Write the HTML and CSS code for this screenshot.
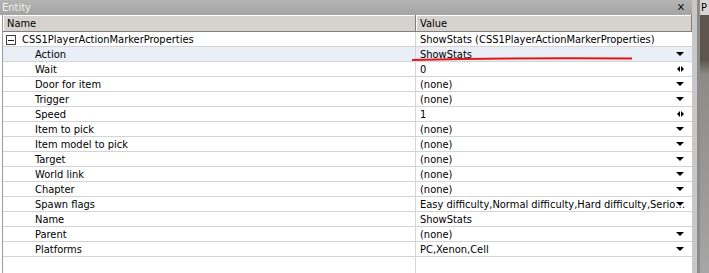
FILE: index.html
```html
<!DOCTYPE html>
<html>
<head>
<meta charset="utf-8">
<link rel="stylesheet" href="styles.css">
</head>
<body>
<div class="app">
  <div class="panel">
    <div class="titlebar"><span class="title">Entity</span><span class="close">✕</span></div>
    <div class="grid">
      <div class="row hdr"><div class="c1">Name</div><div class="c2">Value</div></div>
      <div class="row"><div class="c1 root"><span class="minus"></span>CSS1PlayerActionMarkerProperties</div><div class="c2">ShowStats (CSS1PlayerActionMarkerProperties)</div></div>
      <div class="row sel"><div class="c1 ind">Action</div><div class="c2">ShowStats<span class="dd"></span></div></div>
      <div class="row"><div class="c1 ind">Wait</div><div class="c2">0<span class="spin"><i class="l"></i><i class="r"></i></span></div></div>
      <div class="row"><div class="c1 ind">Door for item</div><div class="c2">(none)<span class="dd"></span></div></div>
      <div class="row"><div class="c1 ind">Trigger</div><div class="c2">(none)<span class="dd"></span></div></div>
      <div class="row"><div class="c1 ind">Speed</div><div class="c2">1<span class="spin"><i class="l"></i><i class="r"></i></span></div></div>
      <div class="row"><div class="c1 ind">Item to pick</div><div class="c2">(none)<span class="dd"></span></div></div>
      <div class="row"><div class="c1 ind">Item model to pick</div><div class="c2">(none)<span class="dd"></span></div></div>
      <div class="row"><div class="c1 ind">Target</div><div class="c2">(none)<span class="dd"></span></div></div>
      <div class="row"><div class="c1 ind">World link</div><div class="c2">(none)<span class="dd"></span></div></div>
      <div class="row"><div class="c1 ind">Chapter</div><div class="c2">(none)<span class="dd"></span></div></div>
      <div class="row"><div class="c1 ind">Spawn flags</div><div class="c2">Easy difficulty,Normal difficulty,Hard difficulty,Serio…<span class="dd"></span></div></div>
      <div class="row"><div class="c1 ind">Name</div><div class="c2">ShowStats</div></div>
      <div class="row"><div class="c1 ind">Parent</div><div class="c2">(none)<span class="dd"></span></div></div>
      <div class="row"><div class="c1 ind">Platforms</div><div class="c2">PC,Xenon,Cell<span class="dd"></span></div></div>
      <div class="row empty"><div class="c1"></div><div class="c2"></div></div>
      <svg class="mark" width="230" height="8" viewBox="0 0 230 8"><path d="M1 5 Q110 2.5 221 3.5" stroke="#e01818" stroke-width="2" fill="none"/></svg>
    </div>
  </div>
  <div class="sep"></div>
  <div class="side"><div class="side-title">P</div><div class="side-img"></div></div>
</div>
</body>
</html>
```
FILE: styles.css
```css
html, body { margin: 0; padding: 0; }
body {
  width: 709px; height: 273px; overflow: hidden;
  font-family: "DejaVu Sans Condensed", "Liberation Sans", sans-serif;
  font-size: 11px; color: #000; background: #fff;
}
.app { display: flex; height: 273px; }
.panel { width: 692px; display: flex; flex-direction: column; background: #fff; }
.titlebar {
  height: 15px; background: linear-gradient(#b4b4b4, #a4a4a4);
  display: flex; align-items: center; justify-content: space-between;
  color: #f2f2f2; padding: 1px 7px 0 2px; box-sizing: border-box;
}
.title { line-height: 14px; }
.close { color: #111; font-size: 11px; line-height: 14px; }
.grid {
  flex: 1; position: relative; display: flex; flex-direction: column;
  border-left: 1px solid #9a9a9a; margin-left: 2px;
}
.row { display: flex; height: 15px; border-bottom: 1px solid #d4d4d4; box-sizing: border-box; }
.row .c1 { width: 413px; border-right: 1px solid #d4d4d4; padding: 1px 0 0 4px; box-sizing: border-box; line-height: 13px; white-space: nowrap; display: flex; align-items: center; }
.row .c2 { flex: 1; padding: 1px 0 0 4px; line-height: 13px; white-space: nowrap; display: flex; align-items: center; position: relative; }
.hdr { height: 17px; background: #d6d3ce; border-bottom: 1px solid #808080; }
.hdr .c1 { border-right: 1px solid #808080; box-shadow: inset 1px 1px 0 #fff; line-height: 15px; }
.hdr .c2 { box-shadow: inset 1px 1px 0 #fff; border-right: 1px solid #808080; line-height: 15px; }
.minus {
  width: 10px; height: 10px; border: 1px solid #404040; box-sizing: border-box;
  margin-right: 6px; position: relative; flex: none; margin-left: -1px;
}
.minus::after { content: ""; position: absolute; left: 1px; right: 1px; top: 4px; height: 1px; background: #202020; }
.ind { padding-left: 32px !important; }
.sel { background: #eaeef6; }
.dd {
  position: absolute; right: 8px; top: 5px;
  width: 0; height: 0; border-left: 4px solid transparent; border-right: 4px solid transparent; border-top: 4px solid #000;
}
.spin { position: absolute; right: 8px; top: 4px; display: flex; gap: 1px; }
.spin i { width: 0; height: 0; border-top: 3.5px solid transparent; border-bottom: 3.5px solid transparent; }
.spin .l { border-right: 3px solid #000; }
.spin .r { border-left: 3px solid #000; }
.empty { flex: 1; border-bottom: none; }
.mark { position: absolute; left: 408px; top: 40px; }
.sep { width: 8px; background: linear-gradient(90deg, #c8c8c8 0 5px, #8c8c8c 5px 8px); }
.side { flex: 1; display: flex; flex-direction: column; background: #a8a8a8; }
.side-title { height: 15px; background: #d6d6d6; line-height: 15px; padding-left: 1px; font-size: 11px; overflow: hidden; }
.side-img { flex: 1; background: linear-gradient(#5e564e 0 45px, #8e8a86 60px, #a6a6a6 100%); }
```
